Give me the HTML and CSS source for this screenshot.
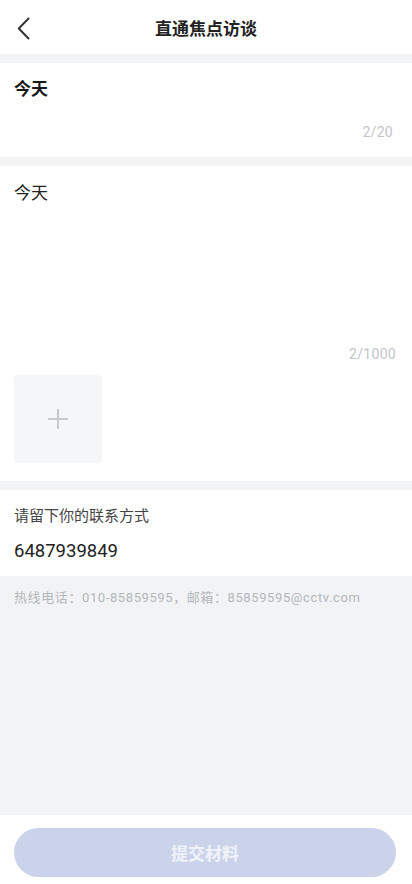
FILE: index.html
```html
<!DOCTYPE html>
<html lang="zh-CN">
<head>
<meta charset="utf-8">
<meta name="viewport" content="width=device-width, initial-scale=1">
<title>直通焦点访谈</title>
<link rel="stylesheet" href="styles.css">
</head>
<body>
<div class="page">
  <header class="topbar">
    <div class="back">
      <svg width="14" height="24" viewBox="0 0 14 24"><path d="M11.5 1.5 L1.8 11.5 L11.5 21.5" fill="none" stroke="#333" stroke-width="2" stroke-linecap="round" stroke-linejoin="round"/></svg>
    </div>
    <h1 class="title">直通焦点访谈</h1>
    <div class="spacer"></div>
  </header>
  <div class="band"></div>
  <section class="card card-title">
    <div class="title-text">今天</div>
    <div class="counter">2/20</div>
  </section>
  <div class="band"></div>
  <section class="card card-body">
    <div class="body-text">今天</div>
    <div class="counter">2/1000</div>
    <div class="upload">
      <svg width="22" height="22" viewBox="0 0 22 22"><path d="M11 1 V21 M1 11 H21" stroke="#c8c9cc" stroke-width="2"/></svg>
    </div>
  </section>
  <div class="band"></div>
  <section class="card card-contact">
    <div class="label">请留下你的联系方式</div>
    <div class="phone">6487939849</div>
  </section>
  <div class="info">热线电话：010-85859595，邮箱：85859595@cctv.com</div>
  <footer class="footer">
    <button class="submit">提交材料</button>
  </footer>
</div>
</body>
</html>
```

FILE: styles.css
```css
* { box-sizing: border-box; }
html, body { margin: 0; padding: 0; }
body {
  font-family: Roboto, "Noto Sans CJK SC", sans-serif;
  color: #222;
  background: #fff;
}
.page {
  width: 412px;
  height: 884px;
  display: flex;
  flex-direction: column;
}
.topbar {
  height: 54px;
  display: grid;
  grid-template-columns: 60px 1fr 60px;
  align-items: center;
  background: #fff;
}
.back {
  padding-left: 17px;
  padding-top: 4px;
  display: flex;
  align-items: center;
}
.title {
  margin: 0;
  text-align: center;
  font-size: 17px;
  font-weight: 700;
  color: #222;
  line-height: 24px;
  padding-top: 4px;
}
.band {
  height: 9px;
  background: #f2f3f5;
}
.card {
  background: #fff;
  padding: 0 14px;
  display: flex;
  flex-direction: column;
}
.card-title {
  padding-top: 14px;
  padding-bottom: 16px;
}
.title-text {
  font-size: 17px;
  font-weight: 700;
  line-height: 24px;
  color: #1a1a1a;
}
.counter {
  text-align: right;
  font-size: 14px;
  line-height: 18px;
  color: #c3c5ca;
  padding-right: 5px;
  letter-spacing: 0.3px;
}
.card-title .counter { margin-top: 22px; }
.card-body {
  padding-top: 15px;
  padding-bottom: 18px;
}
.body-text {
  font-size: 17px;
  line-height: 24px;
  color: #222;
  height: 164px;
}
.card-body .counter { padding-right: 2px; }
.upload {
  margin-top: 12px;
  width: 88px;
  height: 88px;
  border-radius: 4px;
  background: #f5f6f8;
  display: flex;
  align-items: center;
  justify-content: center;
}
.card-contact {
  padding-top: 15px;
  padding-bottom: 13px;
}
.label {
  font-size: 15px;
  line-height: 22px;
  color: #444;
}
.phone {
  margin-top: 12px;
  font-size: 18.5px;
  line-height: 24px;
  color: #222;
}
.info {
  flex: 1;
  background: #f2f3f5;
  padding: 13px 14px 0;
  font-size: 13px;
  line-height: 18px;
  letter-spacing: 0.6px;
  color: #b4b7bc;
}
.footer {
  background: #fff;
  padding: 13px 16px 7px 14px;
}
.submit {
  width: 100%;
  height: 49px;
  border: none;
  border-radius: 25px;
  background: #cbd3eb;
  color: #f1f3fa;
  font-family: Roboto, "Noto Sans CJK SC", sans-serif;
  font-size: 17px;
  font-weight: 700;
  display: block;
}
```
